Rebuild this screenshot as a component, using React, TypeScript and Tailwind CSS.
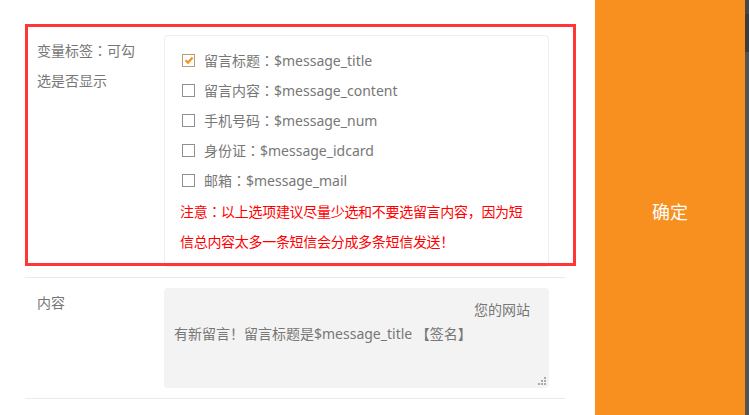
import React from "react";

const fields = [
    { label: "留言标题", key: "$message_title", checked: true },
    { label: "留言内容", key: "$message_content", checked: false },
    { label: "手机号码", key: "$message_num", checked: false },
    { label: "身份证", key: "$message_idcard", checked: false },
    { label: "邮箱", key: "$message_mail", checked: false },
];

// centered full-width colon, like the YaHei one in the original
const Colon = () => <span style={{ fontFamily: '"Noto Sans CJK TC", sans-serif' }}>：</span>;

function CheckBox({ checked }: { checked: boolean }) {
    return (
        <span
            className={`w-[13px] h-[13px] border flex items-center justify-center bg-white shrink-0 ${
                checked ? "border-[#b59a7c]" : "border-[#8f8f8f]"
            }`}
        >
            {checked && (
                <svg width="10" height="10" viewBox="0 0 10 10">
                    <path d="M1.5 5.2 L4 7.6 L8.6 2.4" fill="none" stroke="#f7901e" strokeWidth="2.2" />
                </svg>
            )}
        </span>
    );
}

export default function App() {
    return (
        <div
            className="w-[749px] h-[415px] flex bg-white overflow-hidden"
            style={{ fontFamily: '"Noto Sans", "Noto Sans CJK SC", sans-serif' }}
        >
            {/* form column */}
            <div className="w-[595px] shrink-0 pt-[25px] pl-[25px] pr-[30px]">
                <div className="relative">
                    <div className="flex py-[10px] border-b border-[#ebebeb]">
                        <div className="w-[139px] pl-[12px] text-[14px] leading-[30px] text-[#777]">
                            变量标签<Colon />可勾
                            <br />
                            选是否显示
                        </div>
                        <div className="w-[385px] border border-[#eee] rounded-[4px] px-[15px] pt-[9px] pb-[9px]">
                            {fields.map((f) => (
                                <div key={f.key} className="flex items-center gap-[9px] pl-[2px] h-[30px] text-[14px] text-[#777]">
                                    <CheckBox checked={f.checked} />
                                    <span>
                                        {f.label}
                                        <Colon />
                                        {f.key}
                                    </span>
                                </div>
                            ))}
                            <div className="mt-[1px] text-[14px] leading-[30px] text-[#ff0000] tracking-[-0.3px]">
                                注意<Colon />以上选项建议尽量少选和不要选留言内容，因为短
                                <br />
                                信总内容太多一条短信会分成多条短信发送！
                            </div>
                        </div>
                    </div>
                    {/* red highlight */}
                    <div className="absolute left-0 top-[-1px] w-[551px] h-[242px] border-[3px] border-[#ff3636] pointer-events-none" />

                    <div className="flex py-[10px] border-b border-[#ebebeb]">
                        <div className="w-[139px] pl-[12px] text-[14px] leading-[30px] text-[#777]">内容</div>
                        <div className="relative w-[385px] h-[100px] bg-[#f3f3f3] rounded-[4px] pt-[10px] px-[10px] text-[14px] leading-[24px] text-[#777]">
                            <div className="text-right pr-[9px]">您的网站</div>
                            <div>有新留言！留言标题是$message_title 【签名】</div>
                            <svg className="absolute right-[3px] bottom-[3px]" width="8" height="8" viewBox="0 0 8 8">
                                <rect x="6" y="0" width="2" height="2" fill="#aaa" />
                                <rect x="3" y="3" width="2" height="2" fill="#aaa" />
                                <rect x="6" y="3" width="2" height="2" fill="#aaa" />
                                <rect x="0" y="6" width="2" height="2" fill="#aaa" />
                                <rect x="3" y="6" width="2" height="2" fill="#aaa" />
                                <rect x="6" y="6" width="2" height="2" fill="#aaa" />
                            </svg>
                        </div>
                    </div>
                </div>
            </div>

            {/* confirm panel */}
            <button className="w-[150px] shrink-0 bg-[#f7901e] text-white text-[18px] flex items-center justify-center pt-[10px]">
                确定
            </button>

            {/* scrollbar */}
            <div className="w-[4px] shrink-0 flex flex-col bg-[#535353]">
                <div className="h-[14px] bg-[#474747]" />
                <div className="h-[38px] bg-[#3b3b3b]" />
            </div>
        </div>
    );
}
